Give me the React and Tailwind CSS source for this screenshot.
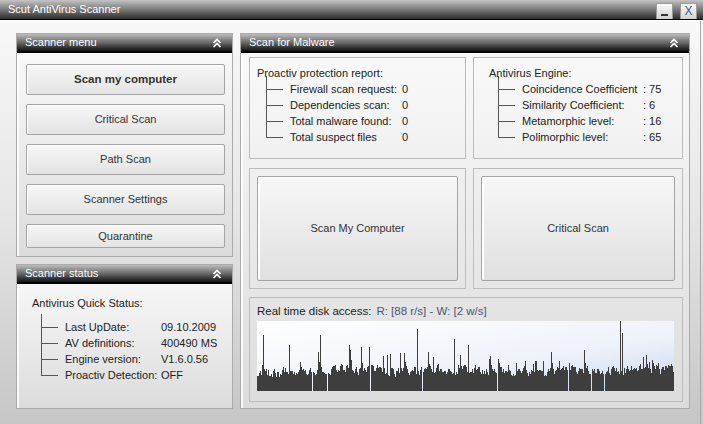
import React from "react";

// deterministic pseudo random for the disk graph
function makeBars(count, seed) {
  let s = seed;
  const rnd = () => {
    s = (s * 1103515245 + 12345) % 2147483648;
    return s / 2147483648;
  };
  const gaps = [70, 55, 113, 165, 240, 311, 334, 347];
  const spikes = { 6: 56, 63: 56, 32: 46, 92: 46, 160: 62, 197: 52, 211: 46, 130: 36, 176: 34, 363: 70, 365: 58, 286: 30, 302: 30, 259: 28, 312: 28 };
  const bars = [];
  let prev = 16;
  let env = 0;
  for (let i = 0; i < count; i++) {
    env = 0.92 * env + 0.08 * (rnd() * 16 - 4);
    let h = 0.4 * prev + 0.6 * (9 + env + rnd() * 14);
    if (rnd() > 0.9) h += 6 + rnd() * 16;
    prev = h;
    if (spikes[i]) h = spikes[i];
    if (gaps.includes(i)) h = 0;
    bars.push(Math.max(3, Math.round(h)) * (h > 0 ? 1 : 0));
  }
  return bars;
}

const bars = makeBars(417, 11);

function Chevrons() {
  return (
    <svg width="10" height="10" viewBox="0 0 10 10" className="text-white">
      <polyline points="1.5,5 5,1.5 8.5,5" fill="none" stroke="currentColor" strokeWidth="1.6" />
      <polyline points="1.5,9 5,5.5 8.5,9" fill="none" stroke="currentColor" strokeWidth="1.6" />
    </svg>
  );
}

function PanelHeader({ title }) {
  return (
    <div className="h-[19px] flex items-center justify-between pl-[8px] pr-[10px] bg-linear-to-b from-[#bdbdbd] via-[#6a6a6a] to-[#141414] border-b-2 border-black">
      <span className="text-white text-[11px] leading-none">{title}</span>
      <Chevrons />
    </div>
  );
}

function Panel({ title, className, children }) {
  return (
    <div className={`flex flex-col border border-[#ababab] bg-linear-to-b from-[#fbfbfb] to-[#dcdcdc] ${className}`}>
      <PanelHeader title={title} />
      <div className="flex-1 flex flex-col border-l-2 border-white/80">{children}</div>
    </div>
  );
}

function MenuButton({ children, bold, h = "h-[31px]" }) {
  return (
    <button
      className={`${h} w-full border border-[#a4a4a4] rounded-[2px] bg-linear-to-b from-[#f7f7f7] to-[#e3e3e3] text-[#333] shadow-[inset_1px_1px_0_#ffffff] ${
        bold ? "font-bold text-[11.5px]" : "text-[11px]"
      }`}
    >
      {children}
    </button>
  );
}

function Tree({ rows, labelW }) {
  return (
    <div className="flex">
      <div className="flex flex-col w-[24px] ml-[9px]">
        {rows.map((r, i) => (
          <div key={i} className="h-[16px] flex items-start">
            <div
              className={`w-px bg-[#555] ${
                i === 0 ? "-mt-[5px] h-[21px]" : i === rows.length - 1 ? "h-[9px]" : "h-[16px]"
              }`}
            />
            <div className="w-[16px] h-px bg-[#555] mt-[8px]" />
          </div>
        ))}
      </div>
      <div className="flex flex-col">
        {rows.map(([l, v], i) => (
          <div key={i} className="h-[16px] flex items-center whitespace-nowrap">
            <span style={{ width: labelW }}>{l}</span>
            <span>{v}</span>
          </div>
        ))}
      </div>
    </div>
  );
}

function Graph() {
  let d = "";
  bars.forEach((h, i) => {
    if (h > 0) d += `M${i + 0.5} 70V${70 - h}`;
  });
  return (
    <svg width="417" height="70" viewBox="0 0 417 70" className="block">
      <defs>
        <linearGradient id="gbg" x1="0" y1="0" x2="1" y2="1">
          <stop offset="0" stopColor="#ffffff" />
          <stop offset="0.6" stopColor="#eef2fa" />
          <stop offset="1" stopColor="#c9d5ee" />
        </linearGradient>
      </defs>
      <rect width="417" height="70" fill="url(#gbg)" />
      <path d={d} stroke="#3e3e3e" strokeWidth="1" />
    </svg>
  );
}

export default function App() {
  return (
    <div className="w-[703px] h-[424px] flex flex-col overflow-hidden font-['Liberation_Sans',Arial,sans-serif] text-[#222] bg-linear-to-b from-[#fafafa] via-[#e6e6e6] to-[#c6c6c6]">
      {/* title bar */}
      <div className="h-[19px] flex items-center justify-between pl-[8px] pr-[6px] bg-linear-to-b from-[#c4c4c4] via-[#7a7a7a] to-[#2e2e2e]">
        <span className="text-white text-[11px] leading-none">Scut AntiVirus Scanner</span>
        <div className="flex gap-[7px] mt-[3px]">
          <div className="w-[17px] h-[17px] border border-[#9a9a9a] bg-linear-to-b from-[#fafafa] to-[#d2d2d2] flex items-end justify-center pb-[3px]">
            <div className="w-[7px] h-[2px] bg-[#333]" />
          </div>
          <div className="w-[17px] h-[17px] border border-[#9a9a9a] bg-linear-to-b from-[#fafafa] to-[#d2d2d2] flex items-center justify-center text-[12px] leading-none text-[#3a5a9a]">
            X
          </div>
        </div>
      </div>
      <div className="h-[2px] border-t border-black bg-white" />

      <div className="flex-1 flex pl-[16px] pt-[12px] border-r border-[#a8a8a8] mr-[2px]">
        {/* left column */}
        <div className="w-[217px] flex flex-col gap-[7px]">
          <Panel title="Scanner menu" className="h-[224px]">
            <div className="flex flex-col gap-[9px] pt-[11px] px-[7px]">
              <MenuButton bold>Scan my computer</MenuButton>
              <MenuButton>Critical Scan</MenuButton>
              <MenuButton>Path Scan</MenuButton>
              <MenuButton>Scanner Settings</MenuButton>
              <MenuButton h="h-[24px]">Quarantine</MenuButton>
            </div>
          </Panel>
          <Panel title="Scanner status" className="h-[145px]">
            <div className="pt-[11px] pl-[13px] text-[11px]">
              <div className="h-[16px] flex items-center">Antivirus Quick Status:</div>
              <div className="mt-[8px]">
                <Tree
                  labelW={96}
                  rows={[
                    ["Last UpDate:", "09.10.2009"],
                    ["AV definitions:", "400490 MS"],
                    ["Engine version:", "V1.6.0.56"],
                    ["Proactiv Detection:", "OFF"],
                  ]}
                />
              </div>
            </div>
          </Panel>
        </div>

        {/* right column */}
        <Panel title="Scan for Malware" className="w-[450px] h-[376px] ml-[7px]">
          <div className="flex flex-col px-[6px] pt-[4px] gap-[8px] text-[11px]">
            <div className="flex gap-[7px] h-[102px]">
              <div className="w-[217px] border border-[#bcbcbc] pt-[7px] pl-[7px]">
                <div className="h-[16px] flex items-center">Proactiv protection report:</div>
                <Tree
                  labelW={112}
                  rows={[
                    ["Firewall scan request:", "0"],
                    ["Dependencies scan:", "0"],
                    ["Total malware found:", "0"],
                    ["Total suspect files", "0"],
                  ]}
                />
              </div>
              <div className="w-[210px] border border-[#bcbcbc] pt-[7px] pl-[15px]">
                <div className="h-[16px] flex items-center">Antivirus Engine:</div>
                <Tree
                  labelW={121}
                  rows={[
                    ["Coincidence Coefficient", ": 75"],
                    ["Similarity Coefficient:", ": 6"],
                    ["Metamorphic level:", ": 16"],
                    ["Polimorphic level:", ": 65"],
                  ]}
                />
              </div>
            </div>
            <div className="flex gap-[7px] h-[121px] mt-[1px]">
              <div className="w-[217px] border border-[#bcbcbc] p-[7px]">
                <button className="w-full h-full border border-[#a4a4a4] rounded-[2px] bg-linear-to-b from-[#f7f7f7] to-[#e0e0e0] text-[#333] shadow-[inset_2px_1px_0_#ffffff]">
                  Scan My Computer
                </button>
              </div>
              <div className="w-[210px] border border-[#bcbcbc] p-[7px]">
                <button className="w-full h-full border border-[#a4a4a4] rounded-[2px] bg-linear-to-b from-[#f7f7f7] to-[#e0e0e0] text-[#333] shadow-[inset_2px_1px_0_#ffffff]">
                  Critical Scan
                </button>
              </div>
            </div>
            <div className="h-[105px] border border-[#bcbcbc] pl-[7px] pt-[6px]">
              <div className="h-[16px] flex items-center gap-[5px] text-[11.5px]">
                <span>Real time disk access:</span>
                <span className="text-[#4a5675]">R: [88 r/s] - W: [2 w/s]</span>
              </div>
              <div className="mt-[1px]">
                <Graph />
              </div>
            </div>
          </div>
        </Panel>
      </div>
    </div>
  );
}
